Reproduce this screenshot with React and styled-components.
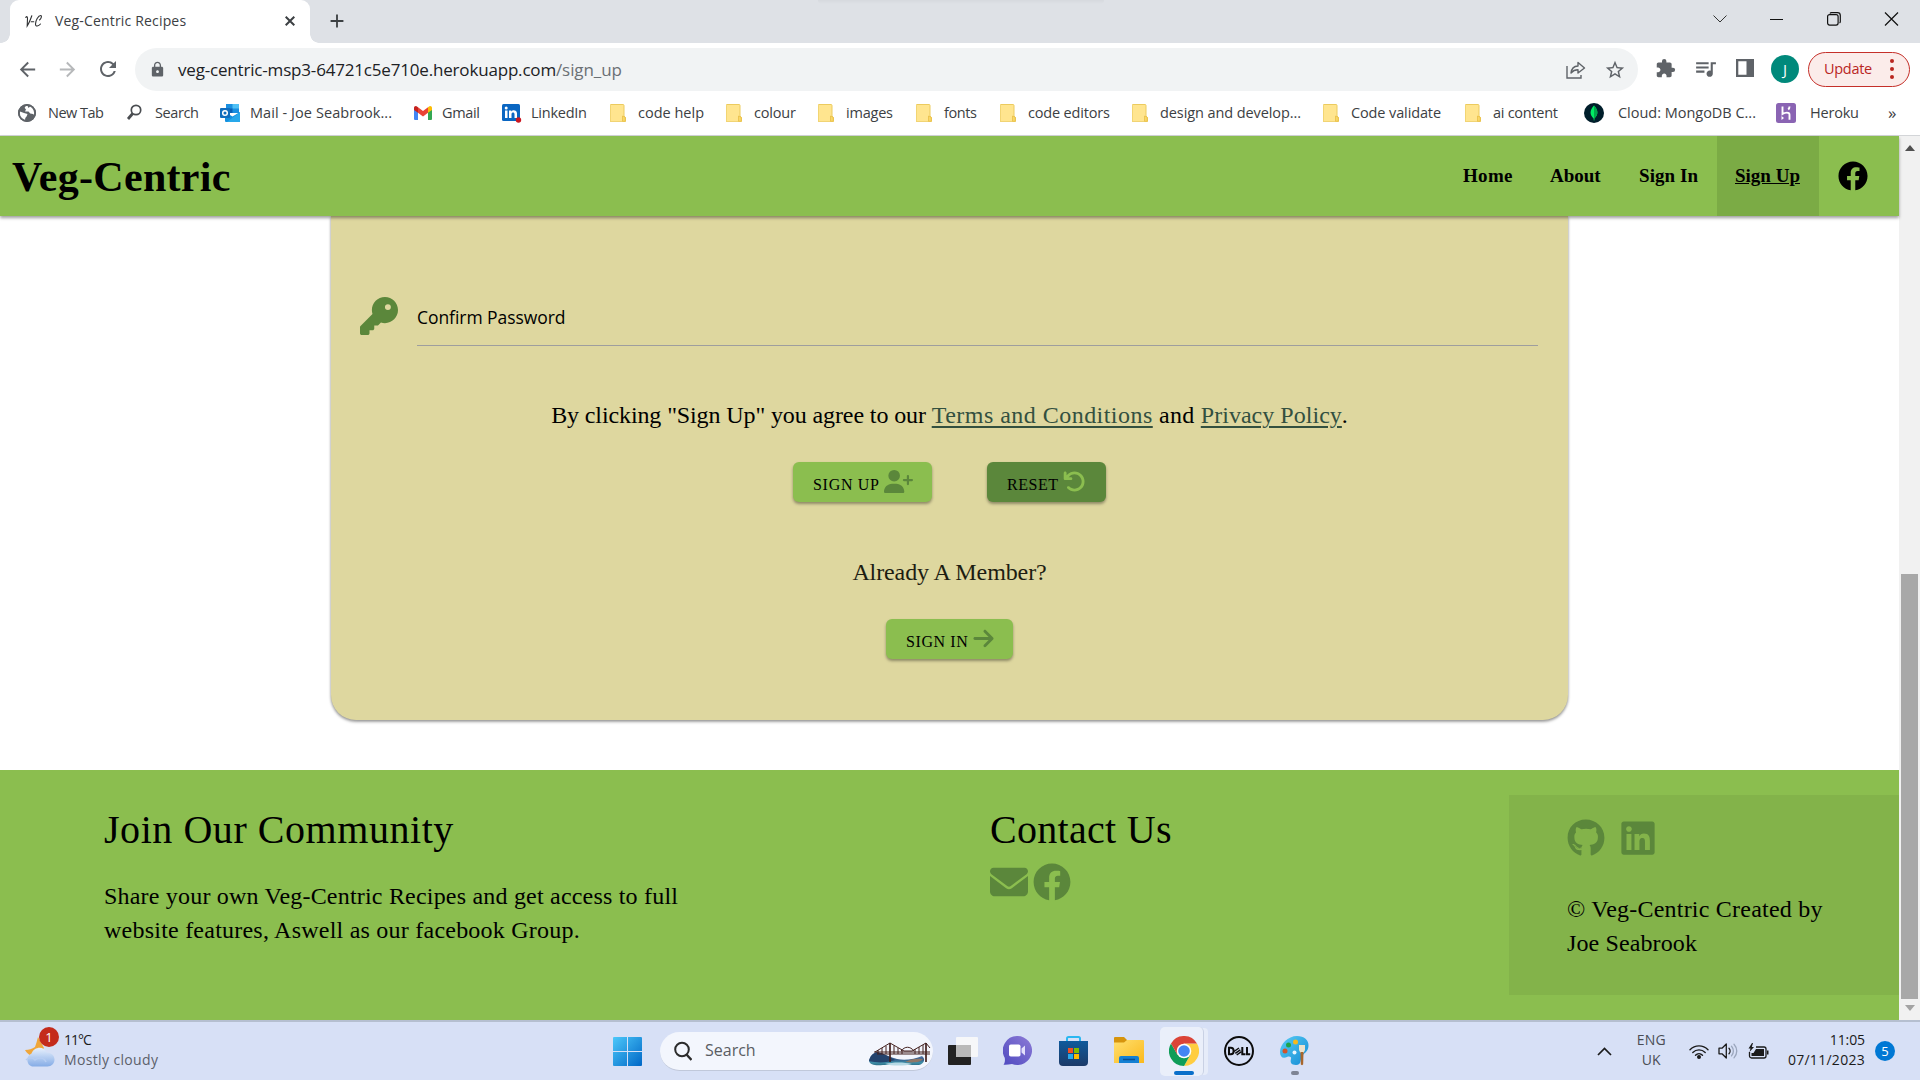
import React from "react";
import styled, { createGlobalStyle, css } from "styled-components";
import {
  FaKey, FaUserPlus, FaArrowRotateLeft, FaArrowRight, FaEnvelope,
} from "react-icons/fa6";
import { FaFacebook, FaGithub, FaLinkedin } from "react-icons/fa";
import {
  MdArrowBack, MdArrowForward, MdRefresh, MdLock, MdStarBorder,
  MdExtension, MdQueueMusic, MdAdd,
} from "react-icons/md";

const green = "#8bbe4f";
const darkGreen = "#5b873b";
const sand = "#ded79f";

const GlobalStyle = createGlobalStyle`
  * { box-sizing: border-box; }
  body { margin: 0; background: #fff; overflow: hidden; }
  svg { display: block; flex: none; }
`;

const Screen = styled.div`
  width: 1920px;
  height: 1080px;
  display: flex;
  flex-direction: column;
  overflow: hidden;
  background: #fff;
  font-family: "Open Sans", "Noto Sans", sans-serif;
`;

const Text = styled.span`
  font-size: ${(p) => p.$size}px;
  letter-spacing: ${(p) => p.$spacing || 0}px;
  color: ${(p) => p.$color || "inherit"};
  white-space: pre;
`;

/* ---------- browser window ---------- */

const TabStrip = styled.div`
  height: 43px;
  flex: none;
  display: flex;
  align-items: flex-start;
  background: #dee1e6;
  padding-left: 10px;
  position: relative;
`;

const TopEdge = styled.div`
  position: absolute;
  left: 818px;
  top: 0;
  width: 286px;
  height: 4px;
  border-radius: 0 0 6px 6px;
  background: linear-gradient(#d6d9de, #dee1e6);
`;

const Tab = styled.div`
  width: 300px;
  height: 43px;
  display: flex;
  align-items: center;
  padding: 0 0 2px 15px;
  background: #fff;
  border-radius: 9px 9px 0 0;
  color: #3c4043;
  position: relative;
  &::before,
  &::after {
    content: "";
    position: absolute;
    bottom: 0;
    width: 9px;
    height: 9px;
  }
  &::before {
    left: -9px;
    background: radial-gradient(circle at 0 0, transparent 8.5px, #fff 9px);
  }
  &::after {
    right: -9px;
    background: radial-gradient(circle at 100% 0, transparent 8.5px, #fff 9px);
  }
`;

const TabTitle = styled.div`
  width: 242px;
  padding-left: 12px;
  line-height: 41px;
`;

const NewTab = styled.div`
  padding: 10px 0 0 16px;
  color: #3c4043;
`;

const WindowControls = styled.div`
  margin-left: auto;
  height: 37px;
  display: flex;
  align-items: center;
  gap: 43px;
  padding-right: 21px;
`;

const Toolbar = styled.div`
  height: 48px;
  flex: none;
  display: flex;
  align-items: center;
  padding: 5px 10px 0 16px;
  color: #5f6368;
`;

const NavIcon = styled.div`
  width: 40px;
  padding-bottom: 1px;
  opacity: ${(p) => (p.$dim ? 0.45 : 1)};
`;

const Omnibox = styled.div`
  width: 1503px;
  height: 43px;
  margin-left: -1px;
  border-radius: 22px;
  background: #f1f3f4;
  display: flex;
  align-items: center;
  padding: 0 12px 0 14px;
  line-height: 43px;
  color: #202124;
`;

const Url = styled.div`
  flex: 1;
  padding-left: 12px;
  line-height: 43px;
`;

const OmniActions = styled.div`
  display: flex;
  align-items: center;
  gap: 18px;
  color: #5f6368;
`;

const Extensions = styled.div`
  display: flex;
  align-items: center;
  width: 170px;
  padding: 0 9px 3px 17px;
  justify-content: space-between;
`;

const Avatar = styled.div`
  width: 28px;
  height: 28px;
  border-radius: 50%;
  background: #00897b;
  color: #fff;
  display: flex;
  align-items: center;
  justify-content: center;
  font-size: 15px;
  margin-bottom: -2px;
`;

const UpdateButton = styled.div`
  width: 102px;
  height: 35px;
  border: 1.5px solid #c5302a;
  border-radius: 18px;
  background: #fbecea;
  color: #b9261f;
  display: flex;
  align-items: center;
  justify-content: space-between;
  padding: 0 15px 2px 15px;
`;

const Dots = styled.div`
  display: grid;
  gap: 4px;
  i {
    width: 4px;
    height: 4px;
    border-radius: 50%;
    background: currentColor;
  }
`;

const Bookmarks = styled.div`
  height: 45px;
  flex: none;
  display: flex;
  padding: 0 0 0 18px;
  border-bottom: 1px solid #d3d5d8;
  line-height: 43px;
  color: #3c4043;
`;

const Bookmark = styled.div`
  width: ${(p) => p.$width}px;
  height: 43px;
  flex: none;
  display: flex;
  align-items: center;
`;

const BookmarkIcon = styled.div`
  width: ${(p) => p.$width}px;
  flex: none;
`;

/* ---------- site ---------- */

const Viewport = styled.div`
  height: 884px;
  flex: none;
  display: flex;
`;

const Page = styled.div`
  width: 1899px;
  display: flex;
  flex-direction: column;
  font-family: "Liberation Serif", serif;
  color: #000;
`;

const Navbar = styled.nav`
  height: 80px;
  flex: none;
  display: flex;
  align-items: center;
  padding: 0 31px 0 12px;
  background: ${green};
  box-shadow: 0 2px 3px rgba(0, 0, 0, 0.38);
  position: relative;
  z-index: 1;
`;

const Brand = styled.div`
  padding-top: 1px;
  margin-right: auto;
  font-size: 42px;
  font-weight: 700;
  line-height: 60px;
`;

const NavLink = styled.a`
  width: ${(p) => p.$width}px;
  height: 80px;
  padding-left: 18px;
  font-size: 19px;
  line-height: 80px;
  font-weight: 700;
  ${(p) =>
    p.$active &&
    css`
      background: #7bab45;
      text-decoration: underline;
    `}
`;

const NavSocial = styled.div`
  padding-left: 19px;
`;

const Card = styled.main`
  width: 1237px;
  height: 504px;
  flex: none;
  margin-left: 331px;
  padding-top: 81px;
  display: flex;
  flex-direction: column;
  align-items: center;
  background: ${sand};
  border-radius: 0 0 25px 25px;
  box-shadow: 0 2px 3px rgba(0, 0, 0, 0.34), 0 0 3px rgba(0, 0, 0, 0.2);
`;

const Field = styled.label`
  width: 1178px;
  align-self: flex-start;
  margin-left: 29px;
  display: flex;
  color: ${darkGreen};
`;

const FieldInput = styled.div`
  width: 1121px;
  height: 49px;
  margin-left: auto;
  line-height: 40px;
  border-bottom: 1px solid #9e9e9e;
  color: #000;
  font-family: "Open Sans", "Noto Sans", sans-serif;
`;

const Terms = styled.p`
  margin: 52px 0 30px;
  font-size: 24px;
  line-height: 34px;
`;

const Link = styled.a`
  color: #33503f;
  text-decoration: underline;
  text-decoration-thickness: 2px;
  text-underline-offset: 3px;
`;

const ButtonRow = styled.div`
  display: flex;
  gap: 55px;
`;

const Button = styled.button`
  width: ${(p) => p.$width}px;
  height: 40px;
  border: 0;
  border-radius: 6px;
  padding: 0 0 0 20px;
  display: flex;
  align-items: center;
  font-family: inherit;
  color: #000;
  background: ${(p) => (p.$dark ? darkGreen : green)};
  box-shadow: 0 2px 3px rgba(0, 0, 0, 0.36);
  svg {
    color: ${(p) => (p.$dark ? green : darkGreen)};
    margin: 0 0 1px 4px;
  }
  span {
    padding-top: 5px;
  }
`;

const Member = styled.p`
  margin: 53px 0 30px;
  font-size: 24px;
  line-height: 34px;
  color: #1d1d12;
`;

const Footer = styled.footer`
  height: 250px;
  margin-top: auto;
  display: flex;
  background: ${green};
`;

const FooterColumn = styled.section`
  width: ${(p) => p.$width}px;
  padding: 35px 0 0 ${(p) => p.$indent}px;
`;

const FooterHeading = styled.h2`
  margin: 0;
  font-size: 40px;
  font-weight: 400;
  line-height: 50px;
`;

const Paragraph = styled.p`
  margin: ${(p) => p.$top}px 0 0;
  line-height: 34px;
  display: flex;
  flex-direction: column;
`;

const IconRow = styled.div`
  display: flex;
  align-items: center;
  gap: ${(p) => p.$gap}px;
  padding-top: ${(p) => p.$top}px;
  color: ${darkGreen};
`;

const Credits = styled.section`
  width: 390px;
  height: 200px;
  margin-top: 25px;
  padding: 24px 0 0 58px;
  background: #83b34a;
`;

const Scrollbar = styled.div`
  width: 21px;
  display: flex;
  flex-direction: column;
  align-items: center;
  justify-content: space-between;
  padding: 9px 0;
  background: #f1f1f1;
`;

const ScrollArrow = styled.div`
  border: 5px solid transparent;
  ${(p) =>
    p.$down
      ? css`border-top: 6px solid #a3a3a3; border-bottom: 0;`
      : css`border-bottom: 6px solid #505050; border-top: 0;`}
`;

const ScrollThumb = styled.div`
  width: 17px;
  height: 425px;
  margin: auto 0 6px;
  background: #a8a8a8;
`;

/* ---------- taskbar ---------- */

const Taskbar = styled.div`
  height: 60px;
  flex: none;
  display: flex;
  align-items: center;
  border-top: 2px solid #b5bfd0;
  background: #d7e0f6;
  padding: 0 25px;
  color: #1b1b1b;
`;

const Weather = styled.div`
  width: 583px;
  display: flex;
  align-items: center;
  gap: 5px;
`;

const WeatherIcon = styled.div`
  width: 34px;
  height: 42px;
  padding-top: 7px;
  position: relative;
`;

const Count = styled.div`
  width: 20px;
  height: 20px;
  border-radius: 50%;
  display: flex;
  align-items: center;
  justify-content: center;
  color: #fff;
  font-size: 13px;
  background: ${(p) => p.$bg};
`;

const WeatherCount = styled(Count)`
  position: absolute;
  left: 14px;
  top: -3px;
`;

const Stack = styled.div`
  display: flex;
  flex-direction: column;
  align-items: ${(p) => p.$align || "flex-start"};
  line-height: 20px;
  padding-bottom: 2px;
`;

const StartSlot = styled.div`
  width: 52px;
  padding-left: 5px;
`;

const SearchBox = styled.div`
  width: 273px;
  height: 39px;
  border-radius: 20px;
  display: flex;
  align-items: center;
  padding: 0 2px 0 14px;
  background: #f3f6fd;
  border-bottom: 1px solid #c0c8da;
  color: #5a5d63;
`;

const SearchHint = styled.div`
  flex: 1;
  padding: 0 0 1px 13px;
  line-height: 34px;
`;

const SearchArt = styled.div`
  padding-top: 7px;
`;

const AppSlot = styled.div`
  width: ${(p) => p.$width}px;
  height: 48px;
  display: flex;
  flex-direction: column;
  align-items: center;
  justify-content: center;
  padding-bottom: ${(p) => (p.$mark ? 0 : 1)}px;
`;

const ActiveApp = styled(AppSlot)`
  height: 49px;
  border-radius: 5px;
  background: #eaeffa;
  border-right: 1px solid #c9d1e4;
  box-shadow: 5px 0 0 -1px #e6ecf9;
  padding: 5px 0 1px 4px;
  justify-content: flex-end;
  gap: 5px;
`;

const Mark = styled.div`
  width: ${(p) => p.$width}px;
  height: 4px;
  border-radius: 2px;
  background: ${(p) => p.$color};
`;

const MarkedApp = styled(AppSlot)`
  justify-content: flex-end;
  gap: 5px;
`;

const Tray = styled.div`
  margin-left: auto;
  display: flex;
  align-items: center;
`;

const TrayItem = styled.div`
  margin-left: ${(p) => p.$left || 0}px;
`;

/* ---------- drawings ---------- */

const CloseMark = () => (
  <svg width="10" height="10" viewBox="0 0 10 10" fill="none" stroke="#3c4043" strokeWidth="2">
    <path d="m.7.700 8.600 8.600M9.300.700.7 9.300" />
  </svg>
);

const Folder = () => (
  <svg width="16" height="18" viewBox="0 0 16 18">
    <path d="M1 .5h12a1 1 0 0 1 1 1V12l1.5 1.5V17a.8.8 0 0 1-.8.8H1a.8.8 0 0 1-.8-.8V1.3A.8.8 0 0 1 1 .5z" fill="#ffe58f" stroke="#eccb5e" strokeWidth="1" />
    <path d="M12.5 12v5.3h2.8v-4z" fill="#f9d868" stroke="#e8bf47" strokeWidth=".8" />
  </svg>
);

const Globe = () => (
  <svg width="18" height="18" viewBox="0 0 18 18">
    <circle cx="9" cy="9" r="9" fill="#5f6368" />
    <path d="M2 7.500 6 9l3.500 1-.8 2.300L7.300 14l-.3 2.500C3.500 15.500 1.500 12.500 1.600 9z" fill="#fff" />
    <path d="M9.500 1.800C8 2 6.500 2.700 6.800 4L8 5.500l-1 2h3.500l1.700 2L15 10l1.200 1C17.200 7.500 15.500 3.700 12.300 2.300L10.500 4z" fill="#fff" />
    <circle cx="9" cy="9" r="8.100" fill="none" stroke="#5f6368" strokeWidth="1.800" />
  </svg>
);

const Magnifier = () => (
  <svg width="16" height="17" viewBox="0 0 16 17" fill="none" stroke="#4a4d51">
    <circle cx="10" cy="6" r="4.700" strokeWidth="1.700" />
    <path d="M6.700 9.500 2 15" strokeWidth="2.800" />
  </svg>
);

const Outlook = () => (
  <svg width="20" height="18" viewBox="0 0 20 18">
    <path d="M6 0h13v9H6z" fill="#1a8fe0" />
    <path d="M12.500 0H19v4.500h-6.500z" fill="#50c0f4" />
    <path d="M6 4.500h6.500V9H6z" fill="#0a5fb4" />
    <path d="M5 8l7.500 4.500L20 8v9a1 1 0 0 1-1 1H6a1 1 0 0 1-1-1z" fill="#1490df" />
    <path d="M20 8v10H7z" fill="#28a8ea" />
    <rect y="4" width="10" height="10" rx="1" fill="#0f6cbd" />
    <circle cx="5" cy="9" r="2.300" fill="none" stroke="#fff" strokeWidth="1.500" />
  </svg>
);

const Gmail = () => (
  <svg width="18" height="14" viewBox="0 0 18 14">
    <path d="M0 2v11a1 1 0 0 0 1 1h3V5z" fill="#4285f4" />
    <path d="M18 2v11a1 1 0 0 1-1 1h-3V5z" fill="#34a853" />
    <path d="M4 1.300v5.500L9 10.500l5-3.700V1.300L9 5z" fill="#ea4335" />
    <path d="M0 2c0-1.800 2-2.500 3.300-1.300L4 1.300v5.500L0 4z" fill="#c5221f" />
    <path d="M18 2c0-1.800-2-2.500-3.300-1.300l-.7.600v5.500L18 4z" fill="#fbbc04" />
  </svg>
);

const LinkedInMark = () => (
  <svg width="20" height="20" viewBox="0 0 20 20">
    <rect y="1" width="18" height="17" rx="1.500" fill="#0a66c2" />
    <path d="M3 7.500h2.500V15H3zM7 7.500h2.300v1C10.800 6.500 15 7 15 10.500V15h-2.500v-4c0-2.300-3-2-3 0v4H7z" fill="#fff" />
    <circle cx="4.200" cy="5" r="1.500" fill="#fff" />
    <circle cx="16.500" cy="17" r="2.700" fill="#cb1620" />
  </svg>
);

const Mongo = () => (
  <svg width="20" height="20" viewBox="0 0 20 20">
    <circle cx="10" cy="10" r="10" fill="#001e2b" />
    <path d="M10 2.500c4.500 5 4.500 9 .4 13l-.2 2h-.4l-.2-2c-4.100-4-4.100-8 .4-13z" fill="#00ed64" />
    <path d="M10 2.500c4.500 5 4.500 9 .4 13l-.2 2H10z" fill="#00a84c" />
  </svg>
);

const Heroku = () => (
  <svg width="20" height="20" viewBox="0 0 20 20">
    <rect width="20" height="20" rx="2.500" fill="#8a64b3" />
    <path d="M6.500 3.500V11c2.500-1.500 7-2.300 7 .7v5M13.500 3.500c0 1.300-.5 2.300-1.300 3" fill="none" stroke="#fff" strokeWidth="1.900" />
    <path d="M5.500 13v4l2.500-2z" fill="#fff" />
  </svg>
);

const Share = () => (
  <svg width="20" height="18" viewBox="0 0 20 18" fill="none" stroke="#5f6368" strokeWidth="1.400">
    <path d="M1 5v12h14v-3" />
    <path d="M5 12c.500-4.500 3-6.800 7-7V1.500L18.500 7 12 12V8.800c-3 0-5 .8-7 3.200z" strokeLinejoin="round" />
  </svg>
);

const SidePanel = () => (
  <svg width="18" height="18" viewBox="0 0 18 18">
    <path d="M0 0h18v18H0zM2.300 2.300v13.400h8.200V2.300z" fill="#5f6368" fillRule="evenodd" />
  </svg>
);

const Favicon = () => (
  <svg width="18" height="14" viewBox="0 0 18 14" fill="none" stroke="#2f3133" strokeWidth="1.100" strokeLinecap="round">
    <path d="M.8 3.500c.9-1.500 1.700-1 1.700 1L2.200 12C4.200 9 5.500 5.500 6.800 1.800" />
    <path d="M6.200 7.800h2.600" />
    <path d="M14.500 6c2-1.500 2.500-4.500 1.200-4.500-2.500 0-5.200 5-5.200 8.500 0 3 3 2.200 5 0" />
  </svg>
);

const WeatherArt = () => (
  <svg width="31" height="31" viewBox="0 0 31 31">
    <defs>
      <linearGradient id="cloud" x1="0" y1="0" x2="0" y2="1">
        <stop offset="0" stopColor="#e8f1fd" />
        <stop offset="1" stopColor="#85ace6" />
      </linearGradient>
    </defs>
    <path d="M13 0c-1 4-2 7-3 10-3 2-6 3-10 3 3 5 8 8 13 6l6-8z" fill="#efa63a" />
    <path d="M7 29.500a7 7 0 0 1-.5-13C9 9.500 19 8.500 21.500 15.500c4 0 8 2.500 8 7 0 4-3 7-7 7z" fill="url(#cloud)" />
    <path d="M1 23c3-3.500 7-2.500 9 0 3-3 9-3 11 2" fill="none" stroke="#b6cdf2" strokeWidth="1.500" />
  </svg>
);

const WindowsLogo = () => (
  <svg width="29" height="29" viewBox="0 0 29 29">
    <defs>
      <linearGradient id="win" x1="0" y1="0" x2="1" y2="1">
        <stop offset="0" stopColor="#4cc8fa" />
        <stop offset="1" stopColor="#0067c6" />
      </linearGradient>
    </defs>
    <path d="M1 0h13v14H0V1a1 1 0 0 1 1-1zM15 0h13a1 1 0 0 1 1 1v13H15zM0 15h14v14H1a1 1 0 0 1-1-1zM15 15h14v13a1 1 0 0 1-1 1H15z" fill="url(#win)" />
  </svg>
);

const TaskSearch = () => (
  <svg width="18" height="20" viewBox="0 0 18 20" fill="none" stroke="#2b2b2b" strokeWidth="2">
    <circle cx="8" cy="8.500" r="6.800" />
    <path d="M12.500 13.500 17.500 19" strokeWidth="2.400" />
  </svg>
);

const Bridge = () => (
  <svg width="62" height="26" viewBox="0 0 62 26">
    <defs>
      <linearGradient id="bay" x1="0" y1="0" x2="0" y2="1">
        <stop offset="0" stopColor="#7fa1d0" />
        <stop offset=".55" stopColor="#335a8a" />
        <stop offset=".8" stopColor="#3f8fa8" />
        <stop offset="1" stopColor="#2b6d86" />
      </linearGradient>
    </defs>
    <path d="M0 20C1 15 4 12 8 11c6 2 12 5 20 7s18 0 25-3c4 3 2 8-3 9H14C7 25 1 24 0 20z" fill="url(#bay)" />
    <path d="M0 20C1 15 4 12 8 11c6 1 12 4 18 8-8 3-18 3-26 1z" fill="#24436d" />
    <path d="M36 21c5-3 12-4 18-3-2 3-8 4-18 3z" fill="#8f7767" />
    <path d="M16 23c8-2 19-2 27 0-7 2-20 2-27 0z" fill="#b7d9e5" />
    <g fill="none" stroke="#43211f" strokeWidth="1">
      <path d="M5 11h56M8 13h53M6 11 21 2l14 8h8L57 2l4 5M25 4.500V13M29 7v6M33 9v4M46 8v5M50 6v7M54 4v9M17 5v8M13 7v6M9 9v4M32 10c4-5 9-5 13 0" />
      <path d="M21 2v19M57 2v19" strokeWidth="1.700" />
    </g>
  </svg>
);

const TaskView = () => (
  <svg width="30" height="28" viewBox="0 0 30 28">
    <rect y="8" width="23" height="20" rx="1" fill="#222" />
    <rect x="8" width="22" height="20" rx="1" fill="#f6f7f9" />
    <path d="M8 8h15v12H8z" fill="#b9b9b9" />
  </svg>
);

const Chat = () => (
  <svg width="29" height="29" viewBox="0 0 29 29">
    <defs>
      <linearGradient id="chat" x1="0" y1="1" x2="1" y2="0">
        <stop offset="0" stopColor="#4f4ac0" />
        <stop offset="1" stopColor="#8d7bd6" />
      </linearGradient>
    </defs>
    <path d="M14.500 0a14.500 14.500 0 1 1-5.500 27.900C6 28.500 3 29 .5 28.700c1.500-2 1.700-4.700 1.200-7A14.500 14.500 0 0 1 14.500 0z" fill="url(#chat)" />
    <rect x="6" y="8.500" width="11.500" height="12" rx="1.800" fill="#fff" />
    <path d="m18.500 12.500 3.500-3v10l-3.500-3z" fill="#e3e0fb" />
  </svg>
);

const Store = () => (
  <svg width="29" height="30" viewBox="0 0 29 30">
    <defs>
      <linearGradient id="store" x1="0" y1="0" x2="0" y2="1">
        <stop offset="0" stopColor="#0f5a9c" />
        <stop offset="1" stopColor="#1c3a68" />
      </linearGradient>
    </defs>
    <path d="M8 6V2.500A1.500 1.500 0 0 1 9.500 1h10A1.500 1.500 0 0 1 21 2.500V6" fill="none" stroke="#2ab7f1" strokeWidth="2" />
    <path d="M0 5h29v21a4 4 0 0 1-4 4H4a4 4 0 0 1-4-4z" fill="url(#store)" />
    <path d="M9 12h5v5H9z" fill="#f25022" />
    <path d="M15 12h5v5h-5z" fill="#7fba00" />
    <path d="M9 18h5v5H9z" fill="#29a9ea" />
    <path d="M15 18h5v5h-5z" fill="#ffb900" />
  </svg>
);

const Explorer = () => (
  <svg width="30" height="27" viewBox="0 0 30 27">
    <defs>
      <linearGradient id="exp" x1="0" y1="0" x2="1" y2="1">
        <stop offset="0" stopColor="#ffdf6e" />
        <stop offset="1" stopColor="#fbb91c" />
      </linearGradient>
    </defs>
    <path d="M0 1a1 1 0 0 1 1-1h9l3.500 3.500L10 7H0z" fill="#d6940d" />
    <path d="M0 5.500h10l3-2.500h16a1 1 0 0 1 1 1v22H0z" fill="url(#exp)" />
    <path d="M5 26v-5a2 2 0 0 1 2-2h16a2 2 0 0 1 2 2v5z" fill="#1480d3" />
    <path d="M9 22.500h12" stroke="#0a4f92" strokeWidth="1.500" />
  </svg>
);

const Chrome = () => (
  <svg width="30" height="30" viewBox="0 0 30 30">
    <path d="M28 7.500A15 15 0 0 1 15 30l6.500-11.500L15 7.500z" fill="#ffcd40" />
    <path d="M2 7.500A15 15 0 0 0 15 30l6.500-11.500L8.500 18.800z" fill="#0f9d58" />
    <path d="M15 7.500h13A15 15 0 0 0 2 7.500l6.500 11.300z" fill="#db4437" />
    <circle cx="15" cy="15" r="7.300" fill="#fff" />
    <circle cx="15" cy="15" r="5.800" fill="#4285f4" />
  </svg>
);

const Dell = () => (
  <svg width="30" height="30" viewBox="0 0 30 30">
    <circle cx="15" cy="15" r="14" fill="none" stroke="#0c0c0c" strokeWidth="2" />
    <g fill="none" stroke="#0c0c0c" strokeWidth="2">
      <path d="M5 11.700h1.800c3.800 0 3.800 6.600 0 6.600H5zM18.300 11v7.300h3.200M23 11v7.300h3.200" />
      <path d="m10 15.500 5-3.500M11.300 17.300l5-3.500M12.700 19l4.800-3.300" strokeWidth="1.500" />
    </g>
  </svg>
);

const Paint = () => (
  <svg width="30" height="30" viewBox="0 0 30 30">
    <defs>
      <linearGradient id="paint" x1="0" y1="0" x2="1" y2="1">
        <stop offset="0" stopColor="#58cdf5" />
        <stop offset="1" stopColor="#138ad4" />
      </linearGradient>
    </defs>
    <path d="M17 0c7 0 12 4 11.500 10C28 16 24 17 22 20s0 9-6 9c-5 0-6-3-5-6 .8-2.500-2-3-4-2-4 2-7 0-7-5C0 8 8 0 17 0z" fill="url(#paint)" />
    <circle cx="8.500" cy="9" r="2.500" fill="#1ea34a" />
    <circle cx="15.500" cy="6" r="2.500" fill="#f7b91d" />
    <circle cx="5" cy="15" r="2.500" fill="#d1542a" />
    <circle cx="14.500" cy="16.500" r="2" fill="#e9f5fd" />
    <path d="M19 9h6v5l-1.500 3h-3L19 14z" fill="#ece2cc" />
    <path d="M20.500 16h3l-.3 12c-.2 1.500-2.200 1.500-2.400 0z" fill="#a8662c" />
  </svg>
);

const Wifi = () => (
  <svg width="20" height="15" viewBox="0 0 20 15" fill="none" stroke="#1b1b1b" strokeWidth="1.400" strokeLinecap="round">
    <path d="M1 5.800c5-5.200 13-5.200 18 0M3.800 8.600c3.500-3.600 8.900-3.600 12.400 0M6.500 11.300c2-2 5-2 7 0" />
    <circle cx="10" cy="13" r="1.300" fill="#1b1b1b" />
  </svg>
);

const Volume = () => (
  <svg width="20" height="16" viewBox="0 0 20 16" fill="none" stroke="#1b1b1b" strokeWidth="1.300" strokeLinejoin="round" strokeLinecap="round">
    <path d="M1 5.200h3L8.300 1v14L4 10.800H1z" />
    <path d="M11 5.300c1.400 1.500 1.400 4 0 5.500" />
    <path d="M13.500 3.200c2.500 2.700 2.500 7 0 9.700M16 1.200c3.700 4 3.700 9.800 0 13.700" stroke="#9aa5bc" />
  </svg>
);

const Battery = () => (
  <svg width="21" height="16" viewBox="0 0 21 16">
    <path d="M8 4h8a2 2 0 0 1 2 2v7a2 2 0 0 1-2 2H3.500a2 2 0 0 1-2-2V9" fill="none" stroke="#1b1b1b" strokeWidth="1.300" />
    <path d="M8 6h8v7H3.500v-3h2zM19 7.500h1.500v4H19zM4 0 .5 5.500h2L1.500 9 6 4H3.800L5 0z" fill="#1b1b1b" />
  </svg>
);

const bookmarks = [
  { label: "New Tab", width: 108, spacing: -0.5, icon: <Globe />, iconWidth: 30 },
  { label: "Search", width: 94, spacing: -0.38, icon: <Magnifier />, iconWidth: 29 },
  { label: "Mail - Joe Seabrook...", width: 194, spacing: 0.07, icon: <Outlook />, iconWidth: 30 },
  { label: "Gmail", width: 88, spacing: -0.34, icon: <Gmail />, iconWidth: 28 },
  { label: "LinkedIn", width: 108, spacing: -0.24, icon: <LinkedInMark />, iconWidth: 29 },
  { label: "code help", width: 116, spacing: 0 },
  { label: "colour", width: 92, spacing: -0.17 },
  { label: "images", width: 98, spacing: -0.21 },
  { label: "fonts", width: 84, spacing: -0.39 },
  { label: "code editors", width: 132, spacing: -0.17 },
  { label: "design and develop...", width: 191, spacing: -0.09 },
  { label: "Code validate", width: 142, spacing: -0.12 },
  { label: "ai content", width: 119, spacing: -0.27 },
  { label: "Cloud: MongoDB C...", width: 192, spacing: -0.02, icon: <Mongo />, iconWidth: 34 },
  { label: "Heroku", width: 112, spacing: -0.2, icon: <Heroku />, iconWidth: 34 },
];

export default function App() {
  return (
    <Screen>
      <GlobalStyle />
      <TabStrip>
        <TopEdge />
        <Tab>
          <Favicon />
          <TabTitle>
            <Text $size={14} $spacing={0.17}>Veg-Centric Recipes</Text>
          </TabTitle>
          <CloseMark />
        </Tab>
        <NewTab><MdAdd size={22} /></NewTab>
        <WindowControls>
          <svg width="14" height="8" viewBox="0 0 14 8" fill="none" stroke="#333"><path d="m.5.500 6.500 6.500L13.500.500" /></svg>
          <svg width="14" height="14" viewBox="0 0 14 14" stroke="#111"><path d="M0 7.500h13" /></svg>
          <svg width="14" height="14" viewBox="0 0 14 14" fill="none" stroke="#111" strokeWidth="1.200"><rect x=".6" y="2.600" width="10.500" height="10.500" rx="2" /><path d="M3 1.500C3.300.8 4 .6 4.600.6H10.500a2.800 2.800 0 0 1 2.800 2.800V9.500c0 .7-.3 1.300-.8 1.600" /></svg>
          <svg width="15" height="14" viewBox="0 0 15 14" stroke="#111" strokeWidth="1.200"><path d="m1 .5 13 13M14 .5l-13 13" /></svg>
        </WindowControls>
      </TabStrip>

      <Toolbar>
        <NavIcon><MdArrowBack size={23} /></NavIcon>
        <NavIcon $dim><MdArrowForward size={23} /></NavIcon>
        <NavIcon><MdRefresh size={24} /></NavIcon>
        <Omnibox>
          <MdLock size={17} color="#5f6368" />
          <Url>
            <Text $size={17} $spacing={-0.18}>veg-centric-msp3-64721c5e710e.herokuapp.com</Text>
            <Text $size={17} $spacing={-0.08} $color="#6b7075">/sign_up</Text>
          </Url>
          <OmniActions>
            <Share />
            <MdStarBorder size={22} />
          </OmniActions>
        </Omnibox>
        <Extensions>
          <MdExtension size={21} />
          <MdQueueMusic size={25} />
          <SidePanel />
          <Avatar>J</Avatar>
        </Extensions>
        <UpdateButton>
          <Text $size={14.5} $spacing={-0.3}>Update</Text>
          <Dots><i /><i /><i /></Dots>
        </UpdateButton>
      </Toolbar>

      <Bookmarks>
        {bookmarks.map((b) => (
          <Bookmark key={b.label} $width={b.width}>
            <BookmarkIcon $width={b.iconWidth || 28}>{b.icon || <Folder />}</BookmarkIcon>
            <Text $size={14.5} $spacing={b.spacing}>{b.label}</Text>
          </Bookmark>
        ))}
        <Text $size={17}>»</Text>
      </Bookmarks>

      <Viewport>
        <Page>
          <Navbar>
            <Brand><Text $size={42} $spacing={0.3}>Veg-Centric</Text></Brand>
            <NavLink $width={87}><Text $size={19} $spacing={0.3}>Home</Text></NavLink>
            <NavLink $width={89}><Text $size={19}>About</Text></NavLink>
            <NavLink $width={96}><Text $size={19} $spacing={0.08}>Sign In</Text></NavLink>
            <NavLink $width={102} $active><Text $size={19}>Sign Up</Text></NavLink>
            <NavSocial><FaFacebook size={30} /></NavSocial>
          </Navbar>

          <Card>
            <Field>
              <FaKey size={38} />
              <FieldInput><Text $size={17.5} $spacing={-0.06}>Confirm Password</Text></FieldInput>
            </Field>
            <Terms>
              <Text $size={24} $spacing={-0.11}>{'By clicking "Sign Up" you agree to our '}</Text>
              <Link><Text $size={24} $spacing={0.47}>Terms and Conditions</Text></Link>
              <Text $size={24} $spacing={0.27}>{" and "}</Text>
              <Link><Text $size={24} $spacing={0.03}>Privacy Policy</Text></Link>
              <Text $size={24}>.</Text>
            </Terms>
            <ButtonRow>
              <Button $width={139}>
                <Text $size={16} $spacing={0.7}>SIGN UP</Text>
                <FaUserPlus size={29} />
              </Button>
              <Button $width={119} $dark>
                <Text $size={16} $spacing={0.55}>RESET</Text>
                <FaArrowRotateLeft size={23} />
              </Button>
            </ButtonRow>
            <Member><Text $size={24} $spacing={-0.1}>Already A Member?</Text></Member>
            <Button $width={127}>
              <Text $size={16} $spacing={0.6}>SIGN IN</Text>
              <FaArrowRight size={23} />
            </Button>
          </Card>

          <Footer>
            <FooterColumn $width={990} $indent={104}>
              <FooterHeading><Text $size={40} $spacing={0.55}>Join Our Community</Text></FooterHeading>
              <Paragraph $top={24}>
                <Text $size={24} $spacing={0.2}>Share your own Veg-Centric Recipes and get access to full</Text>
                <Text $size={24} $spacing={0.23}>website features, Aswell as our facebook Group.</Text>
              </Paragraph>
            </FooterColumn>
            <FooterColumn $width={519} $indent={0}>
              <FooterHeading><Text $size={40} $spacing={0.3}>Contact Us</Text></FooterHeading>
              <IconRow $top={8} $gap={5}>
                <FaEnvelope size={38} />
                <FaFacebook size={38} />
              </IconRow>
            </FooterColumn>
            <Credits>
              <IconRow $top={0} $gap={14}>
                <FaGithub size={38} />
                <FaLinkedin size={38} />
              </IconRow>
              <Paragraph $top={35}>
                <Text $size={24} $spacing={0.22}>© Veg-Centric Created by</Text>
                <Text $size={24} $spacing={0.12}>Joe Seabrook</Text>
              </Paragraph>
            </Credits>
          </Footer>
        </Page>
        <Scrollbar>
          <ScrollArrow />
          <ScrollThumb />
          <ScrollArrow $down />
        </Scrollbar>
      </Viewport>

      <Taskbar>
        <Weather>
          <WeatherIcon>
            <WeatherArt />
            <WeatherCount $bg="#c42b1c">1</WeatherCount>
          </WeatherIcon>
          <Stack>
            <Text $size={14} $spacing={-1}>11°C</Text>
            <Text $size={14} $spacing={0.36} $color="#5c616b">Mostly cloudy</Text>
          </Stack>
        </Weather>
        <StartSlot><WindowsLogo /></StartSlot>
        <SearchBox>
          <TaskSearch />
          <SearchHint><Text $size={16}>Search</Text></SearchHint>
          <SearchArt><Bridge /></SearchArt>
        </SearchBox>
        <AppSlot $width={60}><TaskView /></AppSlot>
        <AppSlot $width={49}><Chat /></AppSlot>
        <AppSlot $width={62}><Store /></AppSlot>
        <AppSlot $width={49}><Explorer /></AppSlot>
        <AppSlot $width={7} />
        <ActiveApp $width={44}>
          <Chrome />
          <Mark $width={20} $color="#0a6fca" />
        </ActiveApp>
        <AppSlot $width={70}><Dell /></AppSlot>
        <MarkedApp $width={42} $mark>
          <Paint />
          <Mark $width={8} $color="#7e8494" />
        </MarkedApp>
        <Tray>
          <TrayItem>
            <svg width="15" height="9" viewBox="0 0 15 9" fill="none" stroke="#1b1b1b" strokeWidth="1.700"><path d="m1 8 6.500-6.500L14 8" /></svg>
          </TrayItem>
          <TrayItem $left={25}>
            <Stack $align="center">
              <Text $size={14} $spacing={0.22} $color="#4a4d55">ENG</Text>
              <Text $size={14} $spacing={0.22} $color="#4a4d55">UK</Text>
            </Stack>
          </TrayItem>
          <TrayItem $left={23}><Wifi /></TrayItem>
          <TrayItem $left={9}><Volume /></TrayItem>
          <TrayItem $left={10}><Battery /></TrayItem>
          <TrayItem $left={19}>
            <Stack $align="flex-end">
              <Text $size={14} $spacing={-0.1}>11:05</Text>
              <Text $size={14} $spacing={0.28}>07/11/2023</Text>
            </Stack>
          </TrayItem>
          <TrayItem $left={10}><Count $bg="#0078d4">5</Count></TrayItem>
        </Tray>
      </Taskbar>
    </Screen>
  );
}
